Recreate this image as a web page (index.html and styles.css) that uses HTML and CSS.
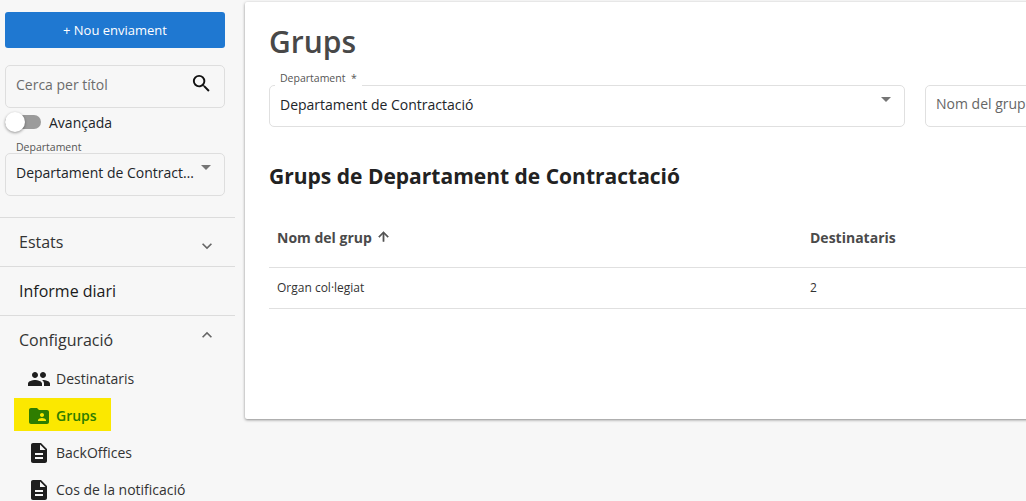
FILE: index.html
```html
<!DOCTYPE html>
<html lang="ca">
<head>
<meta charset="utf-8">
<title>Grups</title>
<link rel="stylesheet" href="styles.css">
</head>
<body>
<div class="page">
  <aside class="sidebar">
    <div class="tools">
      <button class="new-btn">+ Nou enviament</button>
      <div class="search">
        <span class="search-text">Cerca per títol</span>
        <svg class="search-icon" viewBox="0 0 24 24"><path d="M15.5 14h-.79l-.28-.27A6.47 6.47 0 0 0 16 9.5 6.5 6.5 0 1 0 9.5 16c1.61 0 3.09-.59 4.23-1.57l.27.28v.79l5 4.99L20.49 19l-4.99-5zm-6 0C7.01 14 5 11.99 5 9.5S7.01 5 9.5 5 14 7.01 14 9.5 11.99 14 9.5 14z"/></svg>
      </div>
      <div class="toggle-row">
        <span class="switch"><span class="knob"></span></span>
        <span class="toggle-label">Avançada</span>
      </div>
      <div class="side-select">
        <span class="float-label">Departament</span>
        <span class="side-value">Departament de Contractació</span>
        <span class="caret"></span>
      </div>
    </div>
    <nav class="nav">
      <div class="nav-head">
        <span>Estats</span>
        <svg class="chev chev-down" viewBox="0 0 24 24"><path d="M16.59 8.59 12 13.17 7.41 8.59 6 10l6 6 6-6z"/></svg>
      </div>
      <div class="nav-head"><span class="dark">Informe diari</span></div>
      <div class="nav-head nav-open">
        <span class="nav-open-text">Configuració</span>
        <svg class="chev chev-up" viewBox="0 0 24 24"><path d="M12 8l-6 6 1.41 1.41L12 10.83l4.59 4.58L18 14z"/></svg>
      </div>
      <ul class="subnav">
        <li class="sub">
          <svg class="sub-icon" viewBox="0 0 24 24"><path d="M16 11c1.66 0 2.99-1.34 2.99-3S17.66 5 16 5c-1.66 0-3 1.34-3 3s1.34 3 3 3zm-8 0c1.66 0 2.99-1.34 2.99-3S9.66 5 8 5C6.34 5 5 6.34 5 8s1.34 3 3 3zm0 2c-2.33 0-7 1.17-7 3.5V19h14v-2.5c0-2.33-4.67-3.5-7-3.5zm8 0c-.29 0-.62.02-.97.05 1.16.84 1.97 1.97 1.97 3.45V19h6v-2.5c0-2.33-4.67-3.5-7-3.5z"/></svg>
          <span>Destinataris</span>
        </li>
        <li class="sub sub-active">
          <svg class="sub-icon" viewBox="0 0 24 24"><path d="M20 6h-8l-2-2H4c-1.1 0-1.99.9-1.99 2L2 18c0 1.1.9 2 2 2h16c1.1 0 2-.9 2-2V8c0-1.1-.9-2-2-2zm-5 3c1.1 0 2 .9 2 2s-.9 2-2 2-2-.9-2-2 .9-2 2-2zm4 8h-8v-1c0-1.33 2.67-2 4-2s4 .67 4 2v1z"/></svg>
          <span>Grups</span>
        </li>
        <li class="sub">
          <svg class="sub-icon" viewBox="0 0 24 24"><path d="M14 2H6c-1.1 0-1.99.9-1.99 2L4 20c0 1.1.89 2 1.99 2H18c1.1 0 2-.9 2-2V8l-6-6zm2 16H8v-2h8v2zm0-4H8v-2h8v2zm-3-5V3.5L18.5 9H13z"/></svg>
          <span>BackOffices</span>
        </li>
        <li class="sub">
          <svg class="sub-icon" viewBox="0 0 24 24"><path d="M14 2H6c-1.1 0-1.99.9-1.99 2L4 20c0 1.1.89 2 1.99 2H18c1.1 0 2-.9 2-2V8l-6-6zm2 16H8v-2h8v2zm0-4H8v-2h8v2zm-3-5V3.5L18.5 9H13z"/></svg>
          <span>Cos de la notificació</span>
        </li>
      </ul>
    </nav>
  </aside>
  <main class="card">
    <h1 class="title">Grups</h1>
    <div class="filters">
      <div class="field field-dept">
        <span class="float-label">Departament &nbsp;*</span>
        <span class="field-value">Departament de Contractació</span>
        <span class="caret"></span>
      </div>
      <div class="field field-name"><span class="field-hint">Nom del grup</span></div>
    </div>
    <h2 class="subtitle">Grups de Departament de Contractació</h2>
    <div class="table">
      <div class="row row-head">
        <div class="col-a">Nom del grup <svg class="sort" viewBox="0 0 24 24"><path d="M4 12l1.41 1.41L11 7.83V20h2V7.83l5.58 5.59L20 12l-8-8-8 8z"/></svg></div>
        <div class="col-b">Destinataris</div>
      </div>
      <div class="row row-body">
        <div class="col-a">Organ col·legiat</div>
        <div class="col-b">2</div>
      </div>
    </div>
  </main>
</div>
</body>
</html>
```

FILE: styles.css
```css
* { box-sizing: border-box; }
html, body { margin: 0; height: 100%; overflow: hidden; }
body {
  background: #f7f7f7;
  font-family: "Open Sans", "Liberation Sans", sans-serif;
  color: #212529;
}
.page { display: flex; align-items: flex-start; width: 1026px; height: 501px; overflow: hidden; }

.sidebar { flex: none; width: 245px; }
.tools { width: 235px; padding: 12px 10px 0 5px; height: 217px; }
.new-btn {
  display: block; width: 100%; height: 36px; border: 0; border-radius: 3px;
  background: #1f78d1; color: #fff; font: 400 13px "Open Sans", sans-serif;
}
.search {
  margin-top: 17px; height: 43px; border: 1px solid #dedede; border-radius: 5px;
  display: flex; align-items: center; justify-content: space-between;
  padding: 0 11px 0 10px;
}
.search-text { font-size: 14px; color: #6c6c6c; margin-top: -4px; }
.search-icon { width: 23px; height: 23px; margin-top: -6px; fill: #111; }
.toggle-row { display: flex; align-items: center; height: 28px; }
.switch {
  position: relative; width: 36px; height: 14px; border-radius: 7px; background: #9b9b9b;
}
.knob {
  position: absolute; left: 0; top: -3px; width: 20px; height: 20px; border-radius: 50%;
  background: #fff; box-shadow: 0 1px 3px rgba(0,0,0,.4);
}
.toggle-label { margin-left: 8px; font-size: 14px; color: #212529; }
.side-select {
  position: relative; margin-top: 17px; height: 43px; border: 1px solid #dedede; border-radius: 5px;
  padding: 9px 26px 0 10px; font-size: 14px; line-height: 19px;
}
.side-value { display: block; white-space: nowrap; overflow: hidden; text-overflow: ellipsis; }
.float-label {
  position: absolute; left: 6px; padding: 0 5px;
  font-size: 10.5px; line-height: 14px; color: #555;
}
.side-select .float-label { background: #f7f7f7; height: 13px; top: -14px; left: 5px; }
.caret {
  position: absolute; right: 13px; top: 11px; width: 0; height: 0;
  border-left: 5.5px solid transparent; border-right: 5.5px solid transparent; border-top: 5px solid #757575;
}

.nav { width: 235px; }
.nav-head {
  height: 49px; border-top: 1px solid #dcdcdc; display: flex; align-items: center; justify-content: space-between;
  padding: 0 18px 0 19px; font-size: 16px; color: #333;
}
.nav-head .dark { color: #1a1a1a; }
.nav-open { height: 45px; }
.nav-open-text { margin-top: 4px; }
.chev { width: 20px; height: 20px; fill: #666; }
.chev-down { margin-top: 7px; }
.chev-up { margin-top: -6px; }
.subnav { list-style: none; margin: 0; padding: 0; }
.sub {
  height: 37px; display: flex; align-items: center; padding-left: 27px; font-size: 14px; color: #333;
}
.sub span { margin-left: 5px; }
.sub-icon { width: 24px; height: 24px; fill: #1e1e1e; flex: none; }
.sub-active { position: relative; color: #2e7d00; font-weight: 600; }
.sub-active::before {
  content: ""; position: absolute; left: 14px; top: 1px; width: 97px; height: 33px; background: #fbe800; z-index: 0;
}
.sub-active svg, .sub-active span { position: relative; z-index: 1; }
.sub-active .sub-icon { fill: #2e7d00; }
.sub-active span { font-weight: 600; }

.card {
  flex: none; width: 900px; height: 417px; margin-top: 2px; padding: 0 0 0 24px;
  background: #fff; box-shadow: 0 1px 3px rgba(0,0,0,.45); border-radius: 2px 0 0 2px;
}
.title { margin: 0; padding-top: 18px; font-size: 30px; line-height: 44px; font-weight: 600; color: #484848; }
.filters { display: flex; gap: 20px; margin-top: 21px; }
.field { position: relative; height: 42px; border: 1px solid #e0e0e0; border-radius: 5px; background: #fff; }
.field-dept { flex: none; width: 636px; padding: 9px 10px 0; font-size: 14px; line-height: 19px; }
.field-dept .float-label { left: 5px; top: -15px; height: 15px; background: #fff; }
.field-value { color: #212529; }
.field-name { flex: none; width: 300px; padding: 8px 10px 0; font-size: 14px; line-height: 19px; }
.field-hint { color: #666; }
.subtitle { margin: 34px 0 0; font-size: 21px; line-height: 31px; font-weight: 700; color: #222; }
.table { width: 800px; margin-top: 20px; }
.row { display: flex; align-items: center; border-bottom: 1px solid #e0e0e0; }
.row-head { height: 56px; font-size: 14px; font-weight: 700; color: #4a4a4a; padding-bottom: 4px; }
.row-body { height: 41px; font-size: 12px; color: #333; padding-bottom: 2px; font-feature-settings: "locl" 0; }
.col-a { width: 541px; padding-left: 8px; display: flex; align-items: center; gap: 4px; }
.sort { width: 15px; height: 15px; fill: #555; margin-top: -3px; stroke: #555; stroke-width: .8; }
```
